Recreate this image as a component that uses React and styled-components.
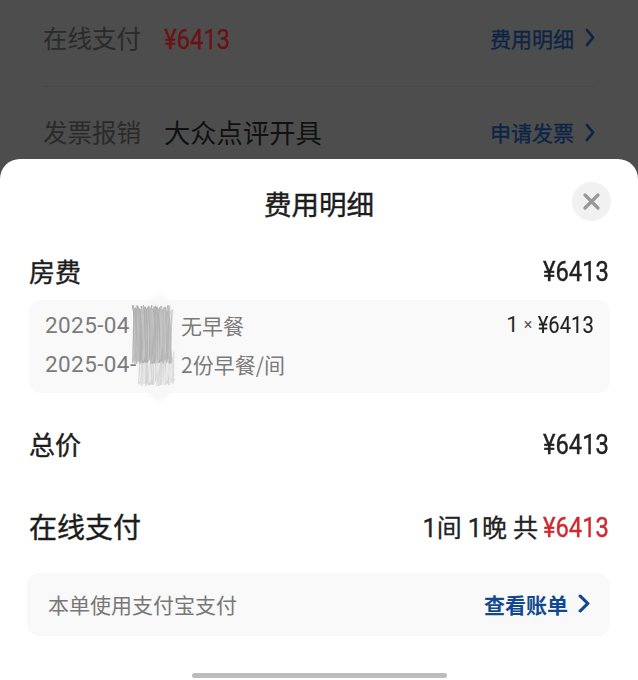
import React from 'react';
import styled, { createGlobalStyle } from 'styled-components';

const GlobalStyle = createGlobalStyle`
    html, body {
        margin: 0;
        padding: 0;
        background: #4d4d4d;
    }
    body {
        font-family: "Noto Sans CJK SC", "Noto Sans", sans-serif;
    }
`;

const Page = styled.div`
    width: 638px;
    height: 680px;
    overflow: hidden;
    display: flex;
    flex-direction: column;
    background: #4d4d4d;
`;

const Backdrop = styled.div`
    height: 159px;
    flex-shrink: 0;
    padding: 0 43px;
    overflow: hidden;
`;

const BackRow = styled.div`
    display: flex;
    align-items: center;
    height: ${(p) => p.$h}px;
    padding-bottom: ${(p) => p.$bottom || 0}px;
    box-sizing: border-box;
    border-bottom: ${(p) => (p.$line ? '1px solid #494949' : 'none')};
`;

const BackLabel = styled.span`
    width: 121px;
    font-size: 24.5px;
    line-height: 32px;
    color: #2a2a2a;
`;

const BackValue = styled.span`
    flex: 1;
    font-size: 26.3px;
    line-height: 32px;
    color: #111;
`;

const BackLink = styled.span`
    display: flex;
    align-items: center;
    gap: 11px;
    font-size: 21px;
    line-height: 28px;
    color: #0c2446;
    -webkit-text-stroke: 0.3px #0c2446;
`;

const Sheet = styled.div`
    flex: 1;
    position: relative;
    background: #fff;
    border-radius: 20px 20px 0 0;
    padding: 0 29px;
`;

const Header = styled.div`
    height: 88px;
    display: flex;
    align-items: center;
    justify-content: center;
    font-size: 27.5px;
    color: #1c1c1c;
    -webkit-text-stroke: 0.4px #1c1c1c;
`;

const Close = styled.div`
    position: absolute;
    top: 23px;
    right: 27px;
    width: 39px;
    height: 39px;
    border-radius: 50%;
    background: #f1f1f1;
    display: flex;
    align-items: center;
    justify-content: center;
`;

const Row = styled.div`
    display: flex;
    align-items: center;
    justify-content: space-between;
    height: ${(p) => p.$h}px;
`;

const Label = styled.span`
    font-size: ${(p) => p.$size}px;
    color: #1c1c1c;
    -webkit-text-stroke: 0.4px #1c1c1c;
`;

// no narrow numeral face is installed, so Roboto gets squeezed to the DIN-like width
const Price = styled.span`
    display: inline-block;
    font-family: "Roboto", sans-serif;
    font-size: ${(p) => p.$size || 27}px;
    line-height: 1;
    margin-top: ${(p) => p.$top ?? 4}px;
    margin-left: ${(p) => p.$pull || 0}px;
    color: ${(p) => p.$color || '#222'};
    -webkit-text-stroke: ${(p) => p.$stroke ?? 0.4}px ${(p) => p.$color || '#222'};
    transform: scaleX(.88);
    transform-origin: ${(p) => p.$origin || 'right'} center;
`;

const DetailBox = styled.div`
    position: relative;
    width: 581px;
    height: 93px;
    margin-top: 7px;
    border-radius: 12px;
    background: #f9f9f9;
    box-sizing: border-box;
    padding: 5px 16px 0 16px;
    display: flex;
    justify-content: space-between;
`;

const Stay = styled.div`
    display: flex;
    flex-direction: column;
`;

const StayLine = styled.div`
    display: flex;
    height: 39px;
    align-items: center;
    font-size: 21px;
    color: #7b7b7b;
`;

const StayDate = styled.span`
    width: 136px;
    font-family: "Roboto", sans-serif;
    font-size: 22.5px;
    letter-spacing: 0.4px;
`;

const Qty = styled.div`
    display: flex;
    align-items: center;
    height: 39px;
    gap: 5px;
    font-family: "Roboto", sans-serif;
    font-size: 22px;
    color: #2a2a2a;
`;

const Times = styled.span`
    font-size: 16px;
    color: #555;
`;

const Smear = styled.svg`
    position: absolute;
    left: 95px;
    top: -8px;
    width: 60px;
    height: 114px;
`;

const Nights = styled.span`
    display: flex;
    align-items: center;
    gap: 5px;
    font-family: "Roboto", "Noto Sans CJK SC", sans-serif;
    font-size: 25px;
    color: #222;
    -webkit-text-stroke: 0.3px #222;
`;

const PayBox = styled.div`
    display: flex;
    align-items: center;
    justify-content: space-between;
    width: 583px;
    height: 63px;
    margin-left: -2px;
    margin-top: 14px;
    border-radius: 12px;
    background: #f9f9f9;
    box-sizing: border-box;
    padding: 0 20px 2px 21px;
`;

const PayText = styled.span`
    font-size: 21px;
    color: #777;
`;

const PayLink = styled.span`
    display: flex;
    align-items: center;
    gap: 10px;
    font-size: 21px;
    font-weight: 700;
    color: #11488f;
`;

const HomeBar = styled.div`
    position: absolute;
    left: 192px;
    bottom: 2px;
    width: 255px;
    height: 5px;
    border-radius: 3px;
    background: #bcbcbc;
`;

const Chevron = ({ color, w = 10, stroke = 2.6 }) => (
    <svg width={w} height="19" viewBox="0 0 11 19" fill="none" preserveAspectRatio="none">
        <path d="M2 2l7 7.5L2 17" stroke={color} strokeWidth={stroke} strokeLinecap="round" strokeLinejoin="round" />
    </svg>
);

// pen scribble that hides the dates: vertical strokes with a fixed pseudo random jitter
const jitter = (i, n) => Math.abs(Math.sin(i * 12.9898 + n * 78.233) * 43758.5453) % 1;

const strokes = (from, to, top, bottom, shades) =>
    Array.from({ length: (to - from) * 3 }, (_, i) => {
        const x = from + i / 3;
        const mid = top + jitter(i, 6) * (bottom - top);
        return (
            <g key={i} stroke={shades[Math.floor(jitter(i, 5) * shades.length)]} strokeWidth="1.4">
                <line x1={x + jitter(i, 1) * 5 - 2.5} y1={top - jitter(i, 2) * 7} x2={x} y2={mid} />
                <line x1={x} y1={mid} x2={x + jitter(i, 3) * 5 - 2.5} y2={bottom + jitter(i, 4) * 6} />
            </g>
        );
    });

function App() {
    return (
        <Page>
            <GlobalStyle />
            <Backdrop>
                <BackRow $line $h={87} $bottom={11}>
                    <BackLabel>在线支付</BackLabel>
                    <BackValue>
                        <Price $color="#6d1114" $stroke={0.3} $top={0} $origin="left">¥6413</Price>
                    </BackValue>
                    <BackLink>费用明细<Chevron color="#0c2446" /></BackLink>
                </BackRow>
                <BackRow $h={90}>
                    <BackLabel>发票报销</BackLabel>
                    <BackValue>大众点评开具</BackValue>
                    <BackLink>申请发票<Chevron color="#0c2446" /></BackLink>
                </BackRow>
            </Backdrop>
            <Sheet>
                <Header>费用明细</Header>
                <Close>
                    <svg width="19" height="19" viewBox="0 0 19 19" fill="none">
                        <path d="M3 3l13 13M16 3L3 16" stroke="#989898" strokeWidth="3.2" strokeLinecap="round" />
                    </svg>
                </Close>
                <Row $h={46}>
                    <Label $size={26}>房费</Label>
                    <Price>¥6413</Price>
                </Row>
                <DetailBox>
                    <Stay>
                        <StayLine><StayDate>2025-04</StayDate>无早餐</StayLine>
                        <StayLine><StayDate>2025-04-</StayDate>2份早餐/间</StayLine>
                    </Stay>
                    <Qty>1<Times>×</Times><Price $size={23} $stroke={0.1} $top={2} $pull={-7}>¥6413</Price></Qty>
                    <Smear viewBox="0 0 60 114">
                        <defs>
                            <filter id="soft"><feGaussianBlur stdDeviation="0.7" /></filter>
                            <filter id="halo"><feGaussianBlur stdDeviation="2.5" /></filter>
                        </defs>
                        <ellipse cx="35" cy="56" rx="20" ry="53" fill="#f7f7f7" filter="url(#halo)" />
                        <g filter="url(#soft)">
                            {strokes(16, 50, 66, 88, ['#d4d4d4', '#dedede', '#e6e6e6', '#ececec'])}
                            {strokes(10, 47, 20, 66, ['#b0b0b0', '#b8b8b8', '#bebebe', '#c6c6c6'])}
                        </g>
                    </Smear>
                </DetailBox>
                <Row $h={100}>
                    <Label $size={26}>总价</Label>
                    <Price>¥6413</Price>
                </Row>
                <Row $h={66}>
                    <Label $size={28}>在线支付</Label>
                    <Nights>1间 1晚 共<Price $color="#cf2a30" $pull={-9}>¥6413</Price></Nights>
                </Row>
                <PayBox>
                    <PayText>本单使用支付宝支付</PayText>
                    <PayLink>查看账单<Chevron color="#11488f" w={12} stroke={3} /></PayLink>
                </PayBox>
                <HomeBar />
            </Sheet>
        </Page>
    );
}

export default App;
